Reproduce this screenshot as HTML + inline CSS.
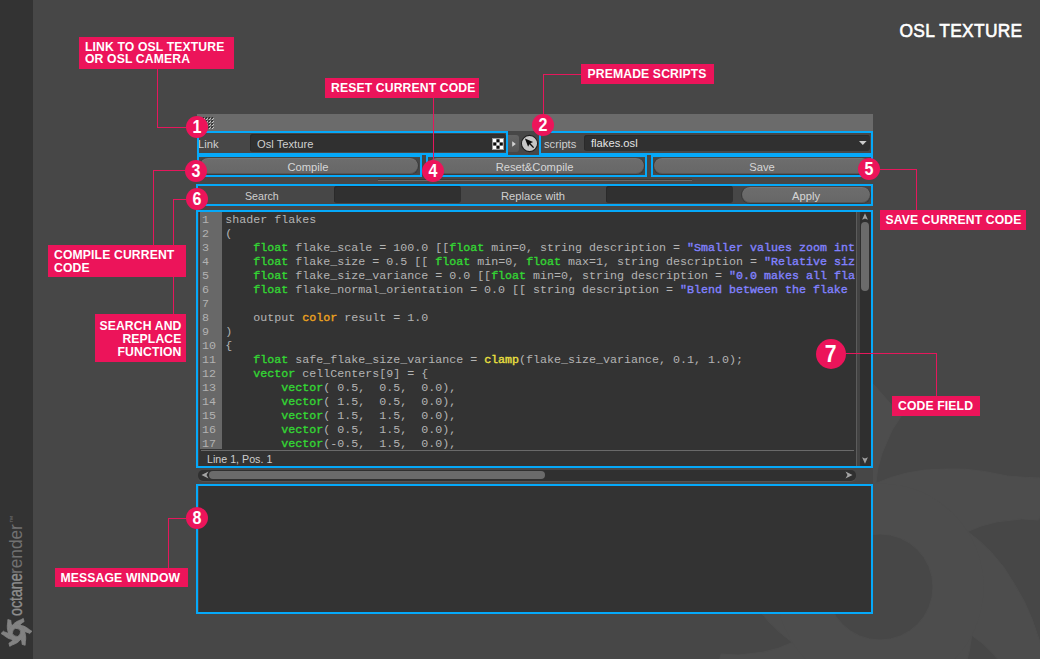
<!DOCTYPE html>
<html lang="en">
<head>
<meta charset="utf-8">
<title>OSL Texture</title>
<style>
*{box-sizing:border-box;margin:0;padding:0}
html,body{width:1040px;height:659px;overflow:hidden;background:#474747}
body{position:relative;font-family:"Liberation Sans",sans-serif;color:#d0d0d0}
.abs{position:absolute}
#side{position:absolute;left:0;top:0;width:33px;height:659px;background:#333}
#title{position:absolute;right:18px;top:18.6px;height:24px;line-height:24px;font-size:18.6px;font-weight:normal;-webkit-text-stroke:.6px #fff;color:#fff;white-space:nowrap;letter-spacing:.3px;transform:scaleX(.935);transform-origin:100% 50%}
/* window */
#hdr{position:absolute;left:197px;top:114px;width:676px;height:17px;background:#6b6b6b}
.bx{position:absolute;border:2px solid #05a9fa}
.row{position:absolute;background:#474747}
.ui{position:absolute;font-size:11.2px;color:#cfcfcf;white-space:nowrap;line-height:14px}
.fld{position:absolute;background:#303030;border-radius:3px;box-shadow:inset 1px 1px 0 #2a2a2a}
.btn{position:absolute;background:linear-gradient(#6d6d6d,#676767);border:1px solid #3a3a3a;border-top-color:#444;border-radius:9px;box-shadow:inset 0 -1px 0 #565656,inset 0 1px 0 #757575;text-align:center;font-size:11.2px;color:#d6d6d6;line-height:18px;height:18px;overflow:hidden}
/* labels */
.lab{position:absolute;background:#ec145a;color:#fff;font-weight:bold;font-size:12.2px;line-height:12px;white-space:nowrap;letter-spacing:.13px}
.lab span{display:block}
.lab.r span{text-align:right;margin-right:-.13px}
.ln{position:absolute;background:#e5175c}
.num{position:absolute;width:22px;height:22px;border-radius:50%;background:#ec145a;color:#fff;font-weight:bold;font-size:18.3px;line-height:22px;text-align:center}
.num b{display:inline-block;transform:scaleX(.88)}
.vt{position:absolute;font-size:17.5px;line-height:20px;white-space:nowrap;transform-origin:0 0}
/* code */
#code{position:absolute;left:199px;top:212px;width:672px;height:254px;background:#333;overflow:hidden}
#gut{position:absolute;left:1px;top:0;width:22px;height:237px;background:#686868}
pre{font-family:"Liberation Mono",monospace;font-size:11.67px;line-height:14px}
#nums{position:absolute;left:3px;top:1px;color:#b2b2b2}
#src{position:absolute;left:26.3px;top:1px;width:629.5px;overflow:hidden;color:#b4b4b4;white-space:pre}
#src .g{color:#33d633;-webkit-text-stroke:.35px #33d633}
#src .o{color:#eda31f;-webkit-text-stroke:.35px #eda31f}
#src .y{color:#ece040;-webkit-text-stroke:.35px #ece040}
#src .s{color:#8282ff;-webkit-text-stroke:.35px #8282ff}
</style>
</head>
<body>
<div id="side"></div>
<svg class="abs" id="wm" style="left:0;top:0" width="1040" height="659" viewBox="0 0 1040 659"><g fill="#4d4d4d" stroke="#4d4d4d" stroke-width="1"><g id="sw"><path fill-rule="evenodd" d="M775.9 587 a104.1 104.1 0 1 0 208.2 0 a104.1 104.1 0 1 0 -208.2 0Z M827 587 a53 53 0 1 1 106 0 a53 53 0 1 1 -106 0Z"/><path d="M788.3 538.8 L790.7 522.8 L794.6 507.1 L800.8 490.3 L810.6 471.5 L820.3 454.8 L831.8 439.4 L847.7 420.9 L857.0 407.5 L865.5 393.9 L873.3 384.1 L901.3 416.0 L892.1 430.0 L882.1 453.0 L877.7 469.0 L875.8 483.5 A103.6 103.6 0 0 0 788.3 538.8Z"/><path d="M875.8 483.5 L890.9 477.5 L906.5 473.1 L924.2 470.1 L945.4 469.1 L964.6 469.2 L983.7 471.4 L1007.7 476.0 L1024.0 477.3 L1039.9 477.9 L1052.3 479.7 L1038.7 520.0 L1022.0 518.9 L997.1 521.8 L981.0 526.0 L967.6 531.6 A103.6 103.6 0 0 0 875.8 483.5Z"/><path d="M967.6 531.6 L980.3 541.7 L991.9 553.0 L1003.4 566.8 L1014.8 584.6 L1024.3 601.4 L1032.0 619.0 L1040.0 642.1 L1047.0 656.8 L1054.4 671.0 L1059.1 682.6 L1017.4 690.9 L1010.0 676.0 L995.0 655.8 L983.3 644.0 L971.7 635.2 A103.6 103.6 0 0 0 967.6 531.6Z"/><path d="M971.7 635.2 L969.3 651.2 L965.4 666.9 L959.2 683.7 L949.4 702.5 L939.7 719.2 L928.2 734.6 L912.3 753.1 L903.0 766.5 L894.5 780.1 L886.7 789.9 L858.7 758.0 L867.9 744.0 L877.9 721.0 L882.3 705.0 L884.2 690.5 A103.6 103.6 0 0 0 971.7 635.2Z"/><path d="M884.2 690.5 L869.1 696.5 L853.5 700.9 L835.8 703.9 L814.6 704.9 L795.4 704.8 L776.3 702.6 L752.3 698.0 L736.0 696.7 L720.1 696.1 L707.7 694.3 L721.3 654.0 L738.0 655.1 L762.9 652.2 L779.0 648.0 L792.4 642.4 A103.6 103.6 0 0 0 884.2 690.5Z"/><path d="M792.4 642.4 L779.7 632.3 L768.1 621.0 L756.6 607.2 L745.2 589.4 L735.7 572.6 L728.0 555.0 L720.0 531.9 L713.0 517.2 L705.6 503.0 L700.9 491.4 L742.6 483.1 L750.0 498.0 L765.0 518.2 L776.7 530.0 L788.3 538.8 A103.6 103.6 0 0 0 792.4 642.4Z"/></g></g></svg>
<div id="title">OSL TEXTURE</div>

<!-- window chrome -->
<div class="abs" id="winbg" style="left:197px;top:131px;width:676px;height:483px;background:#474747"></div>
<div id="hdr"></div>
<svg class="abs" style="left:202px;top:117px" width="12" height="12" viewBox="0 0 12 12"><defs><pattern id="gp" width="3" height="3" patternUnits="userSpaceOnUse"><path d="M0.2 1.9 L1.9 0.2" stroke="#262626" stroke-width="1.1"/><path d="M1.2 2.9 L2.9 1.2" stroke="#ececec" stroke-width=".9"/></pattern></defs><rect width="12" height="12" fill="url(#gp)"/></svg>
<div class="row" style="left:197px;top:131px;width:676px;height:83px"></div>

<!-- row 1 : link / scripts -->
<div class="ui" style="left:198px;top:137px">Link</div>
<div class="fld" style="left:250px;top:134px;width:256px;height:18px"></div>
<div class="ui" style="left:257px;top:137px">Osl Texture</div>
<svg class="abs" style="left:492px;top:138px" width="12" height="12" viewBox="0 0 12 12"><rect x="0.5" y="0.5" width="11" height="11" fill="#fff" stroke="#9c9c9c"/><rect x="4.4" y="1.2" width="3.2" height="3.2" fill="#0a0a0a"/><rect x="1.2" y="4.4" width="3.2" height="3.2" fill="#0a0a0a"/><rect x="7.6" y="4.4" width="3.2" height="3.2" fill="#0a0a0a"/><rect x="4.4" y="7.6" width="3.2" height="3.2" fill="#0a0a0a"/></svg>
<div class="abs" style="left:508px;top:135px;width:11px;height:17px;background:linear-gradient(#636363,#565656);border-radius:0 3px 3px 0"></div>
<svg class="abs" style="left:511.5px;top:140.7px" width="4" height="6" viewBox="0 0 4 6"><path d="M0.2 0.2 L3.8 3 L0.2 5.8Z" fill="#d2d2d2"/></svg>
<svg class="abs" style="left:519.5px;top:133.5px" width="19" height="19" viewBox="-0.5 -0.5 19 19"><circle cx="9" cy="9" r="8.1" fill="#c6c6c6" stroke="#1e1e1e" stroke-width="1.1"/><path d="M4.4 4.1 L12.6 7.6 L9.9 8.7 L13.6 12.7 L12.6 13.6 L8.9 9.7 L7.6 12.3Z" fill="#0c0c0c"/></svg>
<div class="ui" style="left:544px;top:137px">scripts</div>
<div class="fld" style="left:584px;top:135px;width:286px;height:16px"></div>
<div class="ui" style="left:591px;top:136px;color:#e4e4e4">flakes.osl</div>
<svg class="abs" style="left:859.3px;top:141px" width="7.6" height="4" viewBox="0 0 7.6 4"><path d="M0 0 H7.6 L3.8 4Z" fill="#cdcdcd"/></svg>

<!-- row 2 : buttons -->
<div class="btn" style="left:199px;top:157px;width:220px;padding-right:2px">Compile</div>
<div class="btn" style="left:428px;top:157px;width:217px;padding-right:4px">Reset&amp;Compile</div>
<div class="btn" style="left:653px;top:157px;width:218px">Save</div>
<div class="abs" style="left:378px;top:179px;width:314px;height:1px;background:#3a3a3a"></div><div class="abs" style="left:378px;top:180px;width:314px;height:1px;background:#686868"></div>

<!-- row 3 : search -->
<div class="ui" style="left:244.5px;top:189px;transform:scaleX(.95);transform-origin:0 50%">Search</div>
<div class="fld" style="left:334px;top:186px;width:127px;height:17px"></div>
<div class="ui" style="left:501px;top:189px">Replace with</div>
<div class="fld" style="left:606px;top:186px;width:127px;height:17px"></div>
<div class="btn" style="left:741px;top:186px;width:130px">Apply</div>

<!-- code -->
<div id="code">
<div id="gut"></div>
<pre id="nums">1
2
3
4
5
6
7
8
9
10
11
12
13
14
15
16
17</pre>
<pre id="src">shader flakes
(
    <span class="g">float</span> flake_scale = 100.0 [[<span class="g">float</span> min=0, string description = <span class="s">"Smaller values zoom int</span>
    <span class="g">float</span> flake_size = 0.5 [[ <span class="g">float</span> min=0, <span class="g">float</span> max=1, string description = <span class="s">"Relative siz</span>
    <span class="g">float</span> flake_size_variance = 0.0 [[<span class="g">float</span> min=0, string description = <span class="s">"0.0 makes all fla</span>
    <span class="g">float</span> flake_normal_orientation = 0.0 [[ string description = <span class="s">"Blend between the flake</span>

    output <span class="o">color</span> result = 1.0
)
{
    <span class="g">float</span> safe_flake_size_variance = <span class="y">clamp</span>(flake_size_variance, 0.1, 1.0);
    <span class="g">vector</span> cellCenters[9] = {
        <span class="g">vector</span>( 0.5,  0.5,  0.0),
        <span class="g">vector</span>( 1.5,  0.5,  0.0),
        <span class="g">vector</span>( 1.5,  1.5,  0.0),
        <span class="g">vector</span>( 0.5,  1.5,  0.0),
        <span class="g">vector</span>(-0.5,  1.5,  0.0),</pre>
<div class="abs" style="left:2px;top:238px;width:653px;height:1px;background:#6a6a6a"></div>
<div class="ui" style="left:8px;top:240px;transform:scaleX(.955);transform-origin:0 50%">Line 1, Pos. 1</div>
<div class="abs" style="left:657px;top:0;width:1px;height:254px;background:#5c5c5c"></div>
<div class="abs" style="left:658px;top:0;width:3px;height:254px;background:#434343"></div>
<div class="abs" style="left:661px;top:0;width:11px;height:254px;background:#2f2f2f;border-radius:4px"></div>
<div class="abs" style="left:662px;top:10px;width:8px;height:69px;background:#6b6b6b;border-radius:4px"></div>
<svg class="abs" style="left:663px;top:1px" width="6" height="7" viewBox="0 0 6 7"><path d="M3 0.2 L5.9 6.8 L3 5.4 L0.1 6.8Z" fill="#a0a0a0"/></svg>
<svg class="abs" style="left:663px;top:245px" width="6" height="7" viewBox="0 0 6 7"><path d="M3 6.8 L5.9 0.2 L3 1.6 L0.1 0.2Z" fill="#a0a0a0"/></svg>
</div>

<!-- horizontal scrollbar -->
<div class="abs" style="left:198px;top:470px;width:658px;height:10.5px;background:#303030;border-radius:5px;box-shadow:0 1px 0 #525252"></div>
<div class="abs" style="left:209px;top:471px;width:336px;height:8px;background:#6b6b6b;border-radius:4px"></div>
<svg class="abs" style="left:201px;top:471px" width="8" height="8" viewBox="0 0 8 8"><path d="M0.5 4 L7.5 0.5 L5.5 4 L7.5 7.5Z" fill="#a4a4a4"/></svg>
<svg class="abs" style="left:845px;top:471px" width="8" height="8" viewBox="0 0 8 8"><path d="M7.5 4 L0.5 0.5 L2.5 4 L0.5 7.5Z" fill="#a4a4a4"/></svg>

<!-- message window -->
<div class="abs" style="left:199px;top:486px;width:672px;height:126px;background:#333"></div>

<!-- blue highlight boxes -->
<div class="bx" style="left:197px;top:131px;width:311px;height:24px"></div>
<div class="bx" style="left:539px;top:131px;width:334px;height:24px"></div>
<div class="bx" style="left:197px;top:155px;width:225px;height:22px"></div>
<div class="bx" style="left:426px;top:155px;width:221px;height:22px"></div>
<div class="bx" style="left:651px;top:155px;width:222px;height:22px"></div>
<div class="bx" style="left:196px;top:184px;width:677px;height:22px"></div>
<div class="bx" style="left:196px;top:210px;width:677px;height:258px"></div>
<div class="bx" style="left:196px;top:484px;width:677px;height:130px"></div>

<!-- leader lines -->
<div class="ln" style="left:157px;top:69px;width:1px;height:58px"></div>
<div class="ln" style="left:157px;top:127px;width:30px;height:1px"></div>
<div class="ln" style="left:543px;top:74px;width:38px;height:1px"></div>
<div class="ln" style="left:543px;top:74px;width:1px;height:42px"></div>
<div class="ln" style="left:433px;top:97px;width:1px;height:64px"></div>
<div class="ln" style="left:879px;top:169px;width:38px;height:1px"></div>
<div class="ln" style="left:916px;top:169px;width:1px;height:41px"></div>
<div class="ln" style="left:153px;top:170px;width:34px;height:1px"></div>
<div class="ln" style="left:153px;top:170px;width:1px;height:75px"></div>
<div class="ln" style="left:173px;top:199px;width:14px;height:1px"></div>
<div class="ln" style="left:173px;top:199px;width:1px;height:115px"></div>
<div class="ln" style="left:845px;top:353px;width:92px;height:1px"></div>
<div class="ln" style="left:936px;top:353px;width:1px;height:43px"></div>
<div class="ln" style="left:168px;top:518px;width:20px;height:1px"></div>
<div class="ln" style="left:168px;top:518px;width:1px;height:50px"></div>

<!-- labels -->
<div class="lab" style="left:79px;top:37px;width:155px;height:32px;padding:4.4px 0 0 6px"><span>LINK TO OSL TEXTURE</span><span>OR OSL CAMERA</span></div>
<div class="lab" style="left:581px;top:64px;width:133px;height:20px;padding:3.9px 0 0 6.5px"><span>PREMADE SCRIPTS</span></div>
<div class="lab" style="left:325px;top:78px;width:154px;height:20px;padding:3.8px 0 0 6px"><span>RESET CURRENT CODE</span></div>
<div class="lab" style="left:880px;top:210px;width:146px;height:20px;padding:3.6px 0 0 5.5px"><span>SAVE CURRENT CODE</span></div>
<div class="lab" style="left:48px;top:245px;width:138px;height:32px;padding:3.9px 0 0 6px;line-height:13px"><span>COMPILE CURRENT</span><span>CODE</span></div>
<div class="lab r" style="left:95px;top:314px;width:91px;height:48px;padding:5.8px 4.6px 0 0;line-height:13px"><span>SEARCH AND</span><span>REPLACE</span><span>FUNCTION</span></div>
<div class="lab" style="left:892px;top:396px;width:88px;height:20px;padding:3.6px 0 0 6px"><span>CODE FIELD</span></div>
<div class="lab" style="left:55px;top:568px;width:133px;height:19px;padding:4.2px 0 0 5.5px"><span>MESSAGE WINDOW</span></div>

<!-- number bubbles -->
<div class="num" style="left:186px;top:116px"><b>1</b></div>
<div class="num" style="left:532px;top:114px"><b>2</b></div>
<div class="num" style="left:185px;top:160px"><b>3</b></div>
<div class="num" style="left:422px;top:160px"><b>4</b></div>
<div class="num" style="left:858px;top:158px"><b>5</b></div>
<div class="num" style="left:186px;top:188px"><b>6</b></div>
<div class="num" style="left:816px;top:339px;width:30px;height:30px;line-height:30px;font-size:24px"><b>7</b></div>
<div class="num" style="left:186px;top:507px"><b>8</b></div>

<!-- sidebar logo -->
<div class="vt" style="left:5.7px;top:616px;color:#8e8e8e;-webkit-text-stroke:.35px #8e8e8e;transform:rotate(-90deg) scaleX(.81)">octane</div>
<div class="vt" style="left:5.7px;top:573.5px;color:#717171;transform:rotate(-90deg) scaleX(.985)">render</div>
<div class="vt" style="left:8.5px;top:523px;color:#717171;font-size:7.5px;line-height:8px;transform:rotate(-90deg)">™</div>
<svg class="abs" style="left:0;top:615px" width="33" height="40" viewBox="0 615 33 40"><g fill="#828282" stroke="#828282" stroke-width="10" stroke-linejoin="round"><use href="#sw" transform="translate(16.5 632.4) rotate(28) scale(.0763) translate(-880 -587)"/></g></svg>
</body>
</html>
